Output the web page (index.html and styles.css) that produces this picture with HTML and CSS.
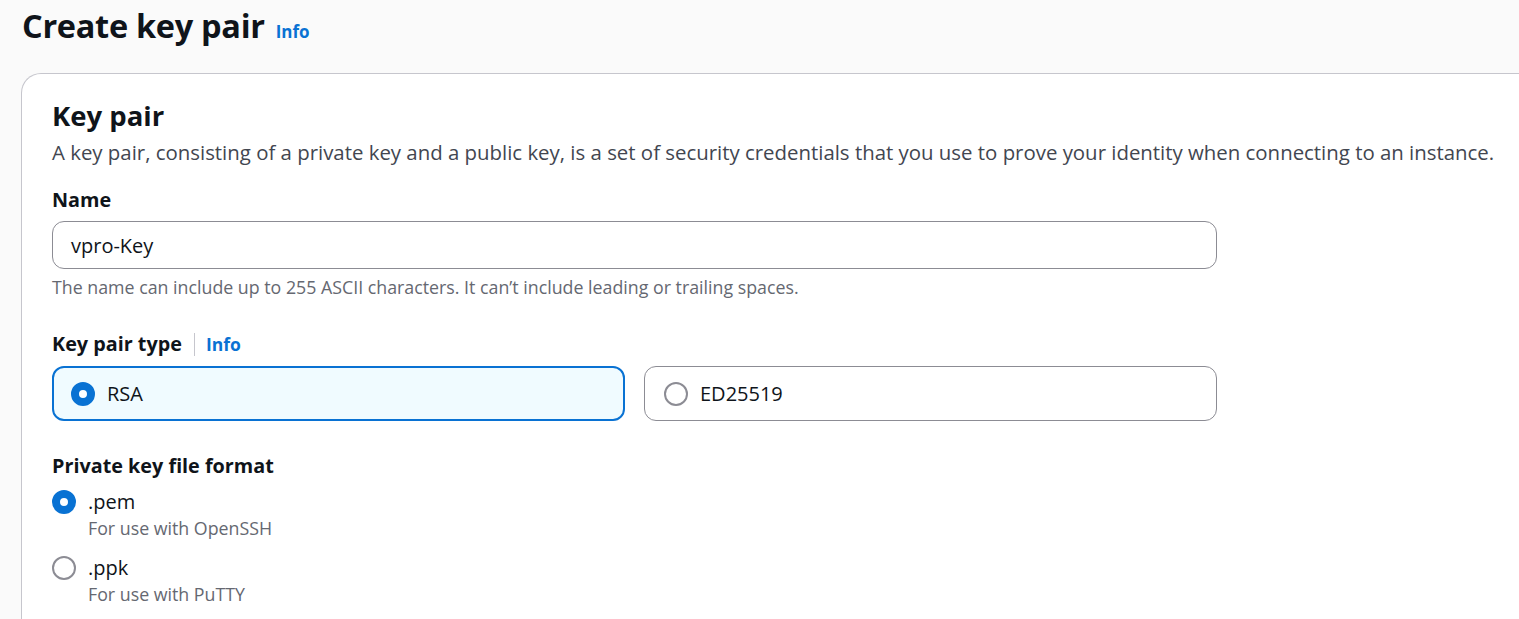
FILE: index.html
```html
<!DOCTYPE html>
<html lang="en">
<head>
<meta charset="utf-8">
<title>Create key pair</title>
<link rel="stylesheet" href="styles.css">
</head>
<body>
<div class="page">
  <header class="page-header">
    <h1 class="page-title">Create key pair</h1>
    <a class="info-link info-link-lg" href="#">Info</a>
  </header>
  <section class="card">
    <div class="card-header">
      <h2 class="card-title">Key pair</h2>
      <p class="card-desc">A key pair, consisting of a private key and a public key, is a set of security credentials that you use to prove your identity when connecting to an instance.</p>
    </div>
    <div class="field field-name">
      <label class="field-label">Name</label>
      <div class="input"><span class="input-value">vpro-Key</span></div>
      <p class="field-hint">The name can include up to 255 ASCII characters. It can’t include leading or trailing spaces.</p>
    </div>
    <div class="field field-type">
      <div class="label-row">
        <span class="field-label">Key pair type</span>
        <span class="label-sep"></span>
        <a class="info-link" href="#">Info</a>
      </div>
      <div class="tiles">
        <div class="tile tile-selected">
          <span class="radio radio-on"></span>
          <span class="tile-text">RSA</span>
        </div>
        <div class="tile">
          <span class="radio"></span>
          <span class="tile-text">ED25519</span>
        </div>
      </div>
    </div>
    <div class="field field-format">
      <span class="field-label">Private key file format</span>
      <div class="radio-group">
        <div class="radio-item">
          <span class="radio radio-on"></span>
          <div class="radio-body">
            <span class="radio-label">.pem</span>
            <span class="radio-desc">For use with OpenSSH</span>
          </div>
        </div>
        <div class="radio-item">
          <span class="radio"></span>
          <div class="radio-body">
            <span class="radio-label">.ppk</span>
            <span class="radio-desc">For use with PuTTY</span>
          </div>
        </div>
      </div>
    </div>
  </section>
</div>
</body>
</html>
```

FILE: styles.css
```css
* { box-sizing: border-box; }
html, body { margin: 0; padding: 0; }
body {
  background: #fafafa;
  font-family: "Open Sans", "Noto Sans", Arial, sans-serif;
  color: #0f141a;
  overflow: hidden;
  height: 619px;
}
.page {
  padding: 0 0 0 21px;
}
.page-header {
  display: flex;
  align-items: baseline;
  gap: 11px;
  height: 73px;
  padding: 2px 0 0 1px;
}
.page-title {
  margin: 0;
  font-size: 32.5px;
  line-height: 48px;
  font-weight: 700;
  letter-spacing: -0.3px;
}
.info-link {
  color: #0972d3;
  font-weight: 700;
  text-decoration: none;
  font-size: 17.5px;
}
.info-link-lg { font-size: 17px; }
.card {
  background: #fff;
  border: 1px solid #c6c6cd;
  border-right: none;
  border-bottom: none;
  border-top-left-radius: 20px;
  padding: 22px 0 40px 30px;
  margin-right: -20px;
  min-height: 600px;
}
.card-title {
  margin: 0;
  font-size: 27.5px;
  line-height: 40px;
  font-weight: 700;
}
.card-desc {
  margin: 1px 0 0;
  font-size: 20.4px;
  line-height: 30px;
  color: #424650;
  white-space: nowrap;
}
.field-label {
  display: block;
  font-size: 19.8px;
  line-height: 28px;
  font-weight: 700;
  color: #0f141a;
}
.field-name { margin-top: 19px; }
.input {
  margin-top: 7px;
  width: 1165px;
  height: 48px;
  border: 1px solid #8c8c94;
  border-radius: 12px;
  display: flex;
  align-items: center;
  padding-left: 18px;
}
.input-value {
  font-size: 20px;
  color: #0f141a;
}
.field-hint {
  margin: 6px 0 0;
  font-size: 17.8px;
  line-height: 24px;
  color: #656871;
}
.field-type { margin-top: 31px; }
.label-row {
  display: flex;
  align-items: center;
  height: 28px;
}
.label-sep {
  width: 1px;
  height: 23px;
  background: #c6c6cd;
  margin: 0 11px 0 12px;
}
.tiles {
  margin-top: 8px;
  display: flex;
  gap: 19px;
  width: 1165px;
}
.tile {
  flex: 1;
  height: 55px;
  border: 1px solid #8c8c94;
  border-radius: 12px;
  display: flex;
  align-items: center;
  padding: 0 0 0 19px;
  gap: 12px;
}
.tile-selected {
  border: 2px solid #0972d3;
  background: #f0fbff;
  padding-left: 17px;
}
.tile-text { font-size: 20px; }
.radio {
  width: 24px;
  height: 24px;
  border-radius: 50%;
  border: 2px solid #8c8c94;
  background: #fff;
  flex: none;
}
.radio-on {
  border: 8px solid #0972d3;
}
.field-format { margin-top: 31px; }
.radio-group {
  margin-top: 8px;
  display: flex;
  flex-direction: column;
  gap: 14px;
}
.radio-item {
  display: flex;
  align-items: flex-start;
  gap: 12px;
}
.radio-item .radio { margin-top: 2px; }
.radio-body {
  display: flex;
  flex-direction: column;
}
.radio-label { font-size: 20px; line-height: 28px; }
.radio-desc { font-size: 17.8px; line-height: 24px; color: #656871; }
```
